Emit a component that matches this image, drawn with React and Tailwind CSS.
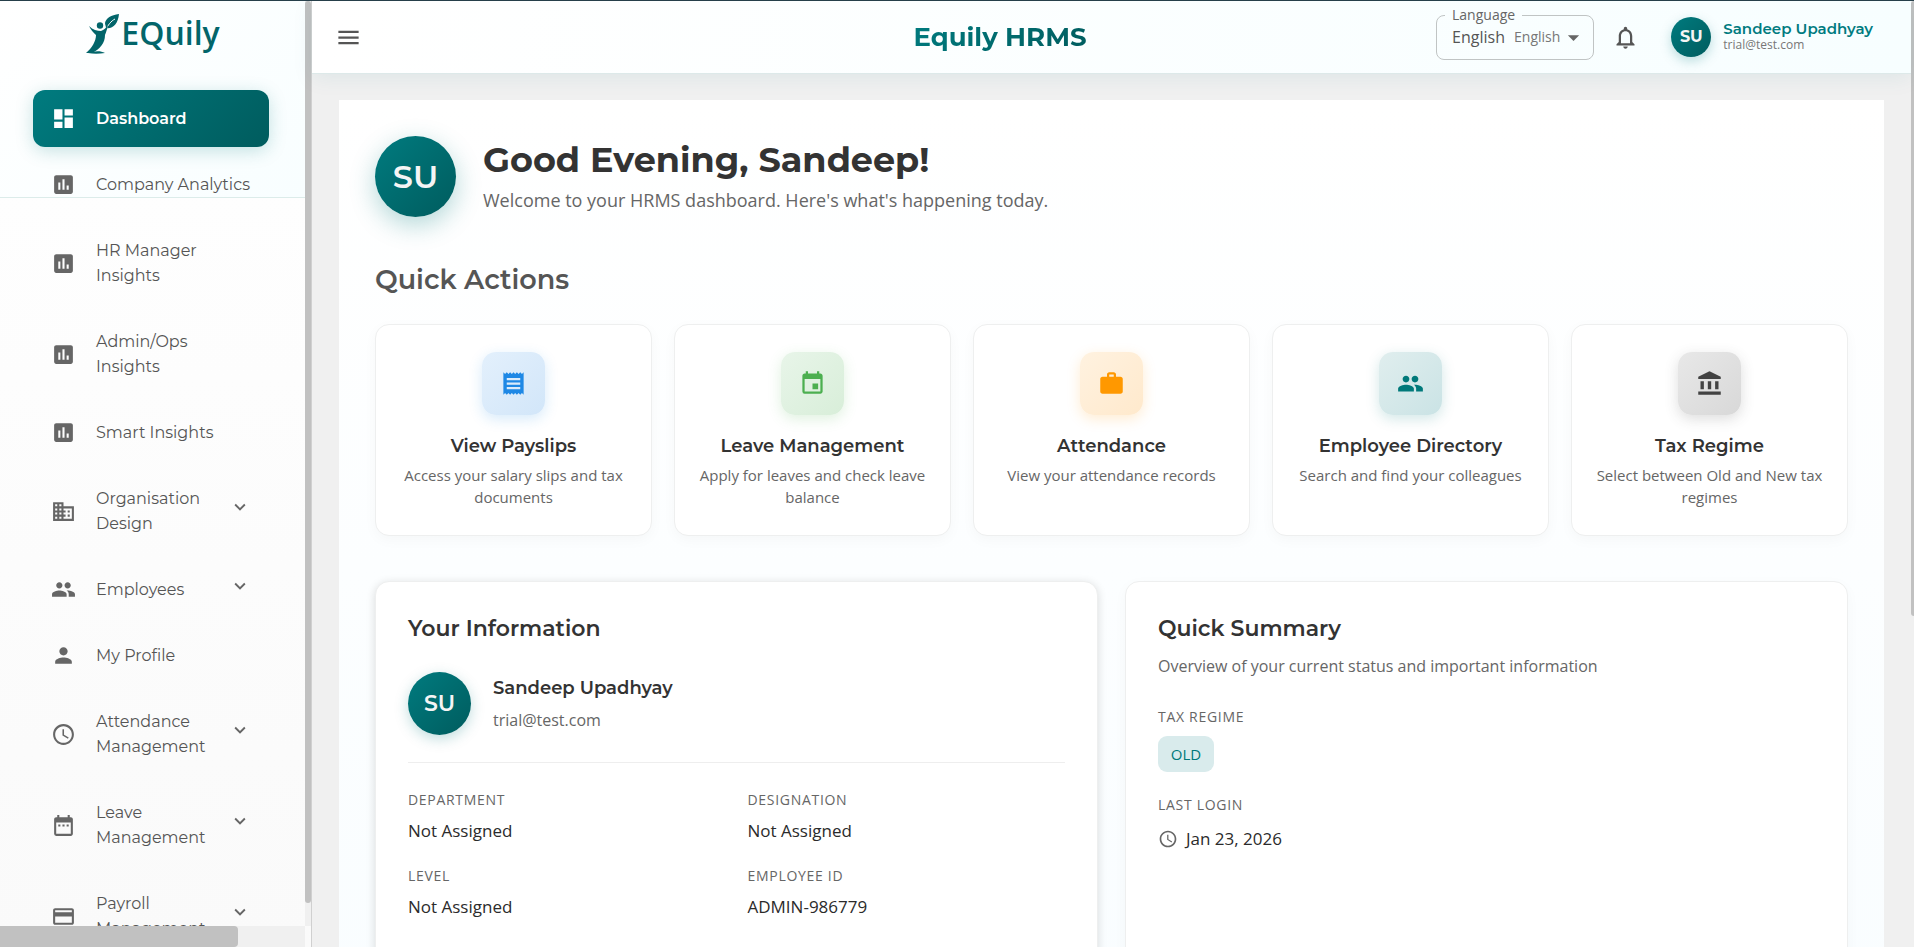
import {
  MdDashboard,
  MdInsertChart,
  MdBusiness,
  MdPeople,
  MdPerson,
  MdAccessTime,
  MdDateRange,
  MdPayment,
  MdKeyboardArrowDown,
  MdMenu,
  MdNotificationsNone,
  MdArrowDropDown,
  MdReceipt,
  MdEvent,
  MdWork,
  MdAccountBalance,
} from "react-icons/md";

const user = { name: "Sandeep Upadhyay", email: "trial@test.com", initials: "SU" };

const navItems = [
  { label: "Dashboard", icon: MdDashboard, active: true },
  { label: "Company Analytics", icon: MdInsertChart },
  { label: "HR Manager Insights", icon: MdInsertChart },
  { label: "Admin/Ops Insights", icon: MdInsertChart },
  { label: "Smart Insights", icon: MdInsertChart },
  { label: "Organisation Design", icon: MdBusiness, hasMenu: true },
  { label: "Employees", icon: MdPeople, hasMenu: true },
  { label: "My Profile", icon: MdPerson },
  { label: "Attendance Management", icon: MdAccessTime, hasMenu: true },
  { label: "Leave Management", icon: MdDateRange, hasMenu: true },
  { label: "Payroll Management", icon: MdPayment, hasMenu: true },
];

const quickActions = [
  {
    title: "View Payslips",
    text: "Access your salary slips and tax documents",
    icon: MdReceipt,
    tile: "text-[#1e88e5] from-[#e3f0fc] to-[#d2e6f9] shadow-[0_4px_14px_rgba(30,136,229,0.18)]",
  },
  {
    title: "Leave Management",
    text: "Apply for leaves and check leave balance",
    icon: MdEvent,
    tile: "text-[#4caf50] from-[#e8f5e9] to-[#d8eed9] shadow-[0_4px_14px_rgba(76,175,80,0.18)]",
  },
  {
    title: "Attendance",
    text: "View your attendance records",
    icon: MdWork,
    tile: "text-[#ff9800] from-[#fff2e0] to-[#ffe9cc] shadow-[0_4px_14px_rgba(255,152,0,0.18)]",
  },
  {
    title: "Employee Directory",
    text: "Search and find your colleagues",
    icon: MdPeople,
    tile: "text-[#00797a] from-[#e0eeee] to-[#cae3e5] shadow-[0_4px_14px_rgba(0,121,122,0.18)]",
  },
  {
    title: "Tax Regime",
    text: "Select between Old and New tax regimes",
    icon: MdAccountBalance,
    tile: "text-[#424242] from-[#e8e8e8] to-[#d8d8d8] shadow-[0_4px_14px_rgba(66,66,66,0.18)]",
  },
];

const details = [
  ["Department", "Not Assigned"],
  ["Designation", "Not Assigned"],
  ["Level", "Not Assigned"],
  ["Employee ID", "ADMIN-986779"],
];

function Avatar({ className }) {
  return (
    <div
      className={`flex shrink-0 items-center justify-center rounded-full bg-linear-135 from-[#007b7f] to-[#005c5e] font-['Montserrat','Inter',sans-serif] text-[#f5f5f5] ${className}`}
    >
      {user.initials}
    </div>
  );
}

function Logo() {
  return (
    <a href="#" className="flex items-start justify-center text-[#02656a]">
      <svg viewBox="0 0 36 42" className="h-[42px] w-9" fill="currentColor" aria-hidden="true">
        <path d="M34 1C26 2 21 5 20 10c0 2 1 3 1 5 7 1 12-4 13-14z" />
        <path d="M30 6C26 8 23 12 20 18" stroke="#fbffff" strokeWidth="1" fill="none" />
        <circle cx="15" cy="12.500" r="3.200" />
        <path d="M4 13c4 4 8 5 12 5 3-1 5-3 7-6-1 5-2 7-3 10 0 8-5 14-13 18H1c6-5 10-12 10-18-3-3-5-5-7-9z" />
        <path d="M7 39c5-1 9-1 13 1-6 1-12 1-17 0z" />
      </svg>
      <span className="font-['Open_Sans',sans-serif] text-[32px] leading-[39px] font-semibold">EQuily</span>
    </a>
  );
}

function Sidebar() {
  return (
    <aside className="flex w-[312px] shrink-0 border-r border-[#d0d0d0] bg-linear-to-b from-white to-[#fafafa]">
      <div className="flex min-w-0 flex-1 flex-col">
        <div className="min-h-0 flex-1 overflow-hidden">
          <div className="h-[197px] border-b border-[#dcecea] bg-linear-135 from-white to-[#f8feff] pt-3">
            <Logo />
          </div>
          <nav className="-mt-[108px] flex flex-col gap-[9px] pr-9 pl-[33px] font-['Montserrat','Inter',sans-serif]">
            {navItems.map(({ label, icon: Icon, active, hasMenu }) => (
              <a
                key={label}
                href="#"
                className={`flex items-center rounded-xl py-4 pr-4 pl-[18px] text-base leading-[25px] ${
                  active
                    ? "bg-linear-135 from-[#007b7f] to-[#005c5e] font-semibold text-white shadow-[0_4px_18px_rgba(0,121,122,0.22)]"
                    : "font-normal text-[#555]"
                }`}
              >
                <Icon className={`mr-5 size-[25px] shrink-0 ${active ? "" : "text-[#666]"}`} />
                <span className={hasMenu ? "w-[110px]" : "flex-1"}>{label}</span>
                {hasMenu && <MdKeyboardArrowDown className="-mt-1 mr-0.5 mb-1 ml-auto size-[22px] text-[#666]" />}
              </a>
            ))}
          </nav>
        </div>
        {/* Horizontal scrollbar */}
        <div className="h-[21px] shrink-0 bg-[#f0f0f0]" aria-hidden="true">
          <div className="h-full w-[78%] rounded-r bg-[#c1c1c1]" />
        </div>
      </div>
      {/* Vertical scrollbar */}
      <div className="mb-[21px] w-1.5 bg-[#f0f0f0]" aria-hidden="true">
        <div className="h-[97.5%] rounded-full bg-[#c1c1c1]" />
      </div>
    </aside>
  );
}

function Header() {
  return (
    <header className="z-10 flex h-[73px] shrink-0 items-center border-b border-[#dde9e9] bg-linear-to-r from-white to-[#f7feff] pr-[38px] pl-[23px] shadow-[0_4px_20px_rgba(0,121,122,0.08)]">
      <button aria-label="Toggle menu" className="text-[#555]">
        <MdMenu className="size-[27px]" />
      </button>
      <h1 className="flex-1 pl-[202px] text-center font-['Montserrat','Inter',sans-serif] text-[26px] font-bold">
        <span className="bg-linear-135 from-[#007b7f] to-[#005c5e] bg-clip-text text-transparent">Equily HRMS</span>
      </h1>
      <fieldset className="mt-1 flex h-[55px] w-[158px] self-start rounded-lg border border-[#c0c4c4] pr-1.5 pl-2">
        <legend className="px-[7px] text-sm leading-5 text-[#666]">
          <label htmlFor="language">Language</label>
        </legend>
        <div className="-mt-1 flex flex-1 items-center pb-1.5 pl-[7px] text-[#555]">
          <select id="language" className="w-[62px] appearance-none bg-transparent text-base leading-6 outline-none">
            <option>English</option>
          </select>
          <span className="text-sm leading-6 text-[#777]">English</span>
          <MdArrowDropDown className="size-[27px] shrink-0 text-[#666]" />
        </div>
      </fieldset>
      <button aria-label="Notifications" className="mr-8 ml-[18px] text-[#555]">
        <MdNotificationsNone className="size-[27px]" />
      </button>
      <Avatar className="size-10 text-base font-bold shadow-[0_4px_12px_rgba(0,121,122,0.25)]" />
      <div className="ml-3">
        <p className="font-['Montserrat','Inter',sans-serif] text-[15px] leading-4 font-semibold text-[#007b7f]">{user.name}</p>
        <p className="text-xs leading-4 text-[#777]">{user.email}</p>
      </div>
    </header>
  );
}

function Field({ label, children }) {
  return (
    <div>
      <dt className="text-sm leading-[22px] tracking-wider text-[#666] uppercase">{label}</dt>
      <dd className="mt-2 text-[17px] leading-6 text-[#2b2b2b]">{children}</dd>
    </div>
  );
}

function Dashboard() {
  return (
    <main className="min-h-[1400px] bg-linear-to-b from-white to-[#f6fcff] p-9">
      <section className="flex items-center gap-[27px]">
        <Avatar className="size-[81px] text-[32px] font-semibold shadow-[0_8px_26px_rgba(0,121,122,0.3)]" />
        <div>
          <h2 className="font-['Montserrat','Inter',sans-serif] text-[35px] leading-10 font-bold text-[#333]">
            Good Evening, Sandeep!
          </h2>
          <p className="mt-1.5 text-lg leading-7 text-[#666]">
            Welcome to your HRMS dashboard. Here's what's happening today.
          </p>
        </div>
      </section>

      <h3 className="mt-[45px] font-['Montserrat','Inter',sans-serif] text-[27px] leading-9 font-semibold text-[#555]">
        Quick Actions
      </h3>
      <div className="mt-[26px] grid grid-cols-5 gap-[22px]">
        {quickActions.map(({ title, text, icon: Icon, tile }) => (
          <button
            key={title}
            className="flex min-h-[212px] flex-col items-center rounded-[14px] border border-[#eeefef] bg-white px-6 py-[27px] text-center shadow-[0_4px_14px_rgba(0,0,0,0.03)]"
          >
            <span className={`flex size-[63px] items-center justify-center rounded-[14px] bg-linear-135 ${tile}`}>
              <Icon className="size-[27px]" />
            </span>
            <span className="mt-[18px] font-['Montserrat','Inter',sans-serif] text-lg leading-[26px] font-semibold text-[#333]">
              {title}
            </span>
            <span className="mt-[5px] text-[15px] leading-[22px] text-[#666]">{text}</span>
          </button>
        ))}
      </div>

      <div className="mt-[45px] grid grid-cols-2 gap-[27px]">
        <section className="min-h-[520px] rounded-[14px] border border-[#eeefef] bg-white p-8 shadow-[0_2px_10px_rgba(0,0,0,0.14)]">
          <h3 className="font-['Montserrat','Inter',sans-serif] text-[22px] leading-[30px] font-semibold text-[#333]">
            Your Information
          </h3>
          <div className="mt-7 flex gap-[22px] border-b border-[#eee] pb-[27px]">
            <Avatar className="size-[63px] text-[22px] font-semibold shadow-[0_4px_14px_rgba(0,121,122,0.25)]" />
            <div>
              <p className="mt-1 font-['Montserrat','Inter',sans-serif] text-lg leading-6 font-semibold text-[#333]">
                {user.name}
              </p>
              <p className="mt-2 text-base leading-6 text-[#666]">{user.email}</p>
            </div>
          </div>
          <dl className="mt-[26px] grid grid-cols-2 gap-[22px]">
            {details.map(([label, value]) => (
              <Field key={label} label={label}>
                {value}
              </Field>
            ))}
          </dl>
        </section>

        <section className="rounded-[14px] border border-[#eeefef] bg-white p-8 shadow-[0_4px_14px_rgba(0,0,0,0.03)]">
          <h3 className="font-['Montserrat','Inter',sans-serif] text-[22px] leading-[30px] font-semibold text-[#333]">
            Quick Summary
          </h3>
          <p className="mt-2.5 text-base leading-6 text-[#666]">
            Overview of your current status and important information
          </p>
          <dl className="mt-7 flex flex-col gap-[22px]">
            <Field label="Tax Regime">
              <span className="flex h-9 w-14 items-center justify-center rounded-[9px] bg-[#d9ebec] text-[15px] text-[#00797a]">
                OLD
              </span>
            </Field>
            <Field label="Last Login">
              <span className="flex items-center gap-2 pt-[3px]">
                <MdAccessTime className="size-5 text-[#666]" />
                Jan 23, 2026
              </span>
            </Field>
          </dl>
        </section>
      </div>
    </main>
  );
}

export default function App() {
  return (
    <div className="flex h-screen overflow-hidden border-t border-[#263f4a] bg-[#f0f0f0] font-['Open_Sans',sans-serif]">
      <Sidebar />
      <div className="flex min-w-0 flex-1 flex-col">
        <Header />
        <div className="min-h-0 flex-1 overflow-hidden px-[27px] pt-[26px]">
          <Dashboard />
        </div>
      </div>
      {/* Page scrollbar */}
      <div className="w-[3px] bg-[#f0f0f0]" aria-hidden="true">
        <div className="h-[65%] rounded-l bg-[#c1c1c1]" />
      </div>
    </div>
  );
}
